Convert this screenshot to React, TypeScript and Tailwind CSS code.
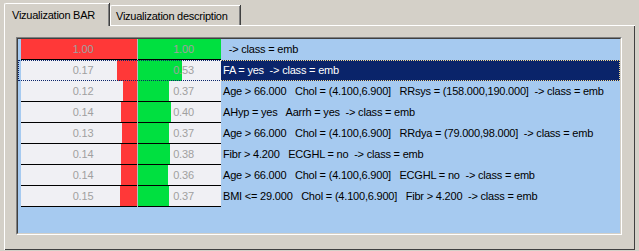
import React from "react";

type Rule = {
  cov: number;
  conf: number;
  text: string;
};

const rules: Rule[] = [
  { cov: 1.0, conf: 1.0, text: "  -> class = emb" },
  { cov: 0.17, conf: 0.53, text: "FA = yes  -> class = emb" },
  { cov: 0.12, conf: 0.37, text: "Age > 66.000   Chol = (4.100,6.900]   RRsys = (158.000,190.000]  -> class = emb" },
  { cov: 0.14, conf: 0.4, text: "AHyp = yes   Aarrh = yes  -> class = emb" },
  { cov: 0.13, conf: 0.37, text: "Age > 66.000   Chol = (4.100,6.900]   RRdya = (79.000,98.000]  -> class = emb" },
  { cov: 0.14, conf: 0.38, text: "Fibr > 4.200   ECGHL = no  -> class = emb" },
  { cov: 0.14, conf: 0.36, text: "Age > 66.000   Chol = (4.100,6.900]   ECGHL = no  -> class = emb" },
  { cov: 0.15, conf: 0.37, text: "BMI <= 29.000   Chol = (4.100,6.900]   Fibr > 4.200  -> class = emb" },
];

const LEFT_W = 116;
const RIGHT_W = 83;

function RuleRow({ rule, selected }: { rule: Rule; selected: boolean }) {
  return (
    <div className="relative flex h-[21px] pl-[3px]">
      {/* coverage cell, bar grows to the left */}
      <div
        className={`relative flex h-full w-[116px] justify-end bg-[#f0f0f4] ${
          selected ? "" : "border-b border-black"
        }`}
      >
        <div className="h-full bg-[#ff3838]" style={{ width: Math.round(rule.cov * LEFT_W) }} />
        <span className="absolute inset-0 flex items-center justify-center pl-2 text-[#a0a0a0]">
          {rule.cov.toFixed(2)}
        </span>
      </div>
      <div className="h-full w-px bg-[#b8b8c0]" />
      {/* confidence cell, bar grows to the right */}
      <div
        className={`relative flex h-full w-[83px] bg-[#f0f0f4] ${
          selected ? "" : "border-b border-black"
        }`}
      >
        <div className="h-full bg-[#00e040]" style={{ width: Math.round(rule.conf * RIGHT_W) }} />
        <span className="absolute inset-0 flex items-center justify-center pl-2 text-[#a0a0a0]">
          {rule.conf.toFixed(2)}
        </span>
      </div>
      <div
        className={`flex h-full flex-1 items-center whitespace-pre pl-[2px] ${
          selected ? "bg-[#0a246a] text-white" : "text-black"
        }`}
      >
        {rule.text}
      </div>
      {selected && (
        <>
          <div className="pointer-events-none absolute inset-0 border border-dotted border-[#0a246a]" />
          <div className="pointer-events-none absolute bottom-0 right-0 top-0 w-[399px] border-y border-r border-dotted border-[#f0d890]" />
        </>
      )}
    </div>
  );
}

export default function App() {
  return (
    <div className="h-[251px] w-[639px] overflow-hidden bg-[#d4d0c8] font-['Liberation_Sans',Arial,sans-serif] text-[11px] tracking-[-0.2px]">
      {/* tabs */}
      <div className="flex h-[25px] items-end pl-[4px]">
        <div className="relative z-10 -mb-px h-[23px] w-[105px] rounded-tl-[2px] border-l border-t border-white bg-[#d4d0c8] pl-[7px] pt-[3px] tracking-[-0.25px] shadow-[inset_-1px_0_0_#808080,1px_0_0_#404040]">
          Vizualization BAR
        </div>
        <div className="ml-[1px] h-[20px] w-[130px] rounded-tl-[2px] border-l border-t border-white bg-[#d4d0c8] pl-[5px] pt-[2px] tracking-[-0.25px] shadow-[inset_-1px_0_0_#808080,1px_0_0_#404040]">
          Vizualization description
        </div>
      </div>

      {/* tab panel */}
      <div className="ml-[4px] h-[225px] w-[631px] border-l border-t border-white shadow-[inset_-1px_-1px_0_#808080]">
        <div className="h-full w-full border-b border-r border-[#404040] pl-[11px] pt-[11px]">
          {/* list box */}
          <div className="h-[198px] w-[606px] border border-b-white border-l-[#808080] border-r-white border-t-[#808080]">
            <div className="h-full w-full border border-b-[#d4d0c8] border-l-[#404040] border-r-[#d4d0c8] border-t-[#404040] bg-[#a6caf0]">
              {rules.map((r, i) => (
                <RuleRow key={i} rule={r} selected={i === 1} />
              ))}
            </div>
          </div>
        </div>
      </div>
    </div>
  );
}
